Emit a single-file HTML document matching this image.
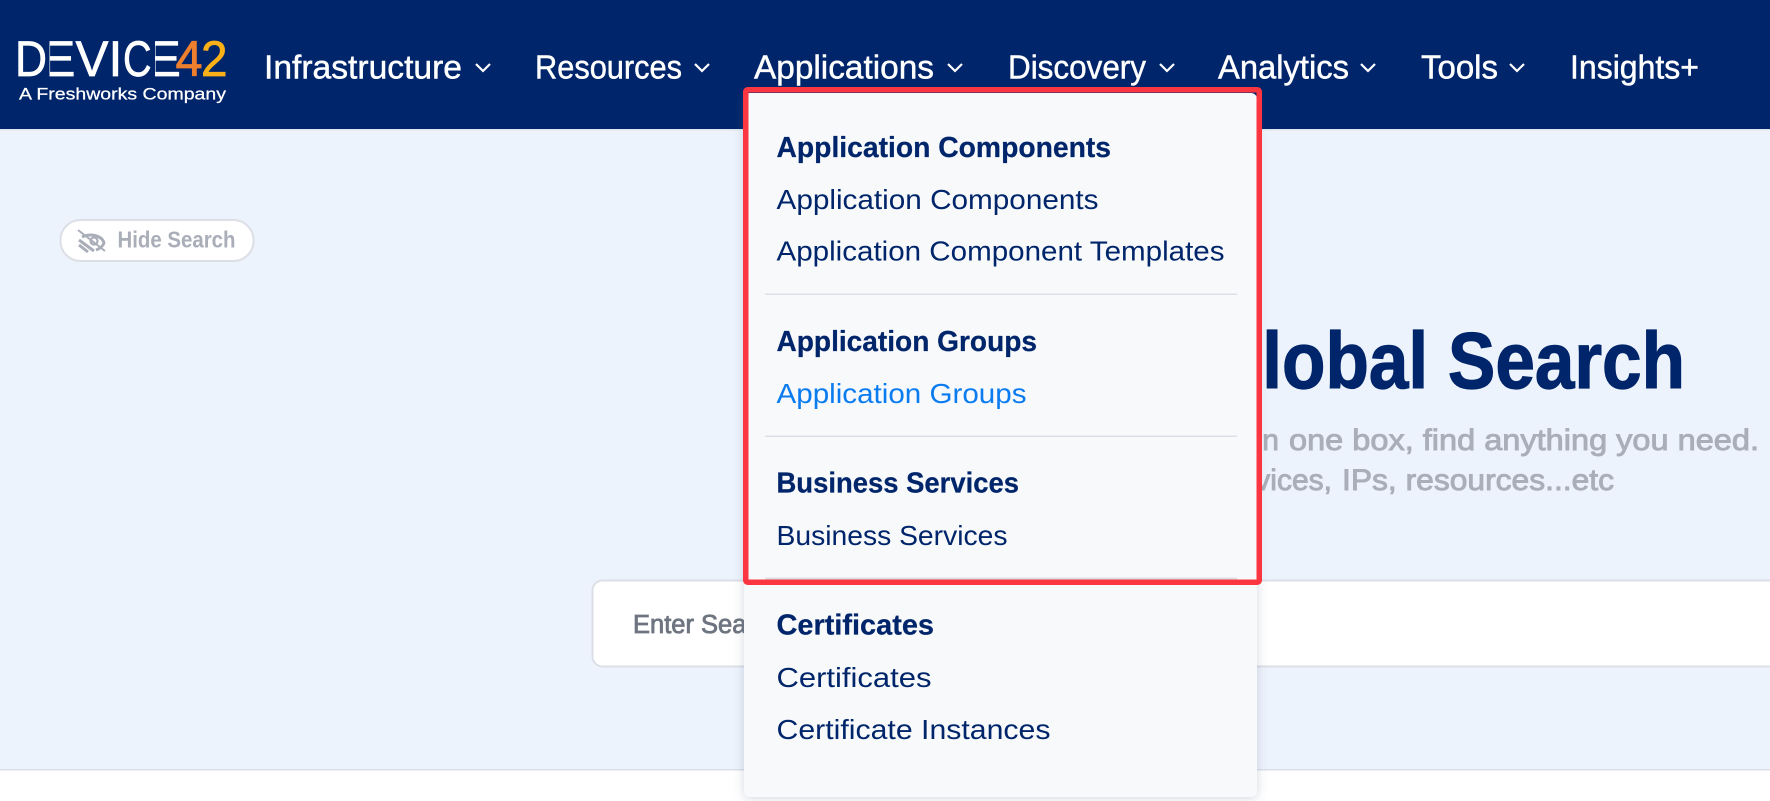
<!DOCTYPE html>
<html lang="en"><head><meta charset="utf-8"><title>Global Search</title>
<style>
html,body{margin:0;padding:0;width:1770px;height:801px;overflow:hidden;background:#fff}
svg{display:block;font-family:"Liberation Sans",sans-serif}
.nav{fill:#fff;font-size:33px;stroke:#fff;stroke-width:.45}
.h{fill:#00256a;font-size:28.5px;font-weight:700;stroke:#00256a;stroke-width:.25}
.i{fill:#00256a;font-size:28px}
.sub{fill:#a9aeb9;font-size:30px;stroke:#a9aeb9;stroke-width:.9}
.ch{fill:none;stroke:#fff;stroke-width:2.2}
.lg{fill:#fff;font-size:50px;stroke:#fff;stroke-width:.7}
</style></head><body>
<svg width="1770" height="801" viewBox="0 0 1770 801" xmlns="http://www.w3.org/2000/svg">
<defs>
<filter id="sh" x="-10%" y="-10%" width="120%" height="120%"><feDropShadow dx="0" dy="1" stdDeviation="5" flood-color="#5a6a8a" flood-opacity=".28"/></filter>
</defs>
<rect width="1770" height="801" fill="#fff"/>
<rect y="129" width="1770" height="641" fill="#edf3fc"/>
<rect y="769" width="1770" height="1.5" fill="#dcdfe6"/>
<rect y="129" width="1770" height="1.5" fill="#dfe5ee"/>
<rect width="1770" height="129" fill="#00256a"/>

<!-- logo -->
<g aria-label="DEVICE42">
<text class="lg" x="40.5" y="76" textLength="35" lengthAdjust="spacingAndGlyphs">E</text>
<rect x="38" y="36" width="11.5" height="44" fill="#00256a"/>
<text class="lg" x="146" y="76" textLength="35" lengthAdjust="spacingAndGlyphs">E</text>
<rect x="144" y="36" width="11" height="44" fill="#00256a"/>
<text class="lg" x="15" y="76" textLength="32" lengthAdjust="spacingAndGlyphs">D</text>
<text class="lg" x="75.5" y="76" textLength="33" lengthAdjust="spacingAndGlyphs">V</text>
<text class="lg" x="108.5" y="76">I</text>
<text class="lg" x="123" y="76" textLength="28.6" lengthAdjust="spacingAndGlyphs">C</text>
<text x="175.5" y="76" font-size="50" fill="#ee7f2c" stroke="#ee7f2c" stroke-width=".8" textLength="27" lengthAdjust="spacingAndGlyphs">4</text>
<text x="201" y="76" font-size="50" fill="#fbb017" stroke="#fbb017" stroke-width=".8" textLength="26.5" lengthAdjust="spacingAndGlyphs">2</text>
</g>
<text x="19" y="99.5" font-size="16.5" fill="#fff" textLength="207" lengthAdjust="spacingAndGlyphs" stroke="#fff" stroke-width=".25">A Freshworks Company</text>

<!-- nav -->
<text class="nav" x="264" y="78.5" textLength="198" lengthAdjust="spacingAndGlyphs">Infrastructure</text>
<path class="ch" d="M476 64l7 7 7-7"/>
<text class="nav" x="535" y="78.5" textLength="147" lengthAdjust="spacingAndGlyphs">Resources</text>
<path class="ch" d="M695 64l7 7 7-7"/>
<text class="nav" x="754" y="78.5" textLength="180" lengthAdjust="spacingAndGlyphs">Applications</text>
<path class="ch" d="M948 64l7 7 7-7"/>
<text class="nav" x="1008" y="78.5" textLength="138" lengthAdjust="spacingAndGlyphs">Discovery</text>
<path class="ch" d="M1160 64l7 7 7-7"/>
<text class="nav" x="1218" y="78.5" textLength="131" lengthAdjust="spacingAndGlyphs">Analytics</text>
<path class="ch" d="M1361 64l7 7 7-7"/>
<text class="nav" x="1421" y="78.5" textLength="77" lengthAdjust="spacingAndGlyphs">Tools</text>
<path class="ch" d="M1510 64l7 7 7-7"/>
<text class="nav" x="1570" y="78.5" textLength="129" lengthAdjust="spacingAndGlyphs">Insights+</text>

<!-- hide search -->
<rect x="60.5" y="220" width="193" height="41" rx="20" fill="#fff" stroke="#dcdfe6" stroke-width="2"/>
<g fill="none" stroke="#a9aeb9">
<path d="M78 230l27 21" stroke-width="2"/>
<path d="M82 237q9-4 17 0 4 2 5 6-2 5-8 7" stroke-width="3"/>
<path d="M79 240l15 11M79 245l9 7" stroke-width="3"/>
<circle cx="94" cy="241" r="3.5" stroke-width="2.2"/>
</g>
<text x="117.5" y="247.5" font-size="23" font-weight="700" fill="#a9aeb9" textLength="118" lengthAdjust="spacingAndGlyphs">Hide Search</text>

<!-- hero -->
<text x="1207" y="388" font-size="80" font-weight="700" fill="#00256a" stroke="#00256a" stroke-width="1.2" textLength="478" lengthAdjust="spacingAndGlyphs">Global Search</text>
<text class="sub" x="1279" y="450" text-anchor="end">Search in</text>
<text class="sub" x="1289" y="450" textLength="470" lengthAdjust="spacingAndGlyphs">one box, find anything you need.</text>
<text class="sub" x="1332" y="490" text-anchor="end">Devices,</text>
<text class="sub" x="1342" y="490" textLength="272" lengthAdjust="spacingAndGlyphs">IPs, resources...etc</text>

<!-- search box -->
<rect x="592.5" y="580.5" width="1300" height="86" rx="10" fill="#fff" stroke="#dcdfe6" stroke-width="2"/>
<text x="633" y="633" font-size="25.5" fill="#6f7580" stroke="#6f7580" stroke-width=".8">Enter Search</text>

<!-- menu panel -->
<rect x="744" y="93" width="513" height="704" rx="6" fill="#f7f9fb" filter="url(#sh)"/>
<text class="h" x="776.5" y="157" textLength="334.5" lengthAdjust="spacingAndGlyphs">Application Components</text>
<text class="i" x="776.5" y="209" textLength="322" lengthAdjust="spacingAndGlyphs">Application Components</text>
<text class="i" x="776.5" y="260.5" textLength="448" lengthAdjust="spacingAndGlyphs">Application Component Templates</text>
<rect x="765" y="293.5" width="472" height="1.5" fill="#dcdfe6"/>
<text class="h" x="776.5" y="351" textLength="260.5" lengthAdjust="spacingAndGlyphs">Application Groups</text>
<text class="i" x="776.5" y="403" textLength="250" lengthAdjust="spacingAndGlyphs" style="fill:#0a7cf0">Application Groups</text>
<rect x="765" y="435.5" width="472" height="1.5" fill="#dcdfe6"/>
<text class="h" x="776.5" y="492.5" textLength="242.5" lengthAdjust="spacingAndGlyphs">Business Services</text>
<text class="i" x="776.5" y="545" textLength="231" lengthAdjust="spacingAndGlyphs">Business Services</text>
<rect x="765" y="577.5" width="472" height="2" fill="#dcdfe6"/>
<text class="h" x="776.5" y="634.5" textLength="157.5" lengthAdjust="spacingAndGlyphs">Certificates</text>
<text class="i" x="776.5" y="687" textLength="155" lengthAdjust="spacingAndGlyphs">Certificates</text>
<text class="i" x="776.5" y="739" textLength="274" lengthAdjust="spacingAndGlyphs">Certificate Instances</text>

<!-- red highlight -->
<rect x="745.75" y="89.75" width="513.5" height="492.5" rx="2" fill="none" stroke="#fb3640" stroke-width="5.5"/>
</svg>
</body></html>
